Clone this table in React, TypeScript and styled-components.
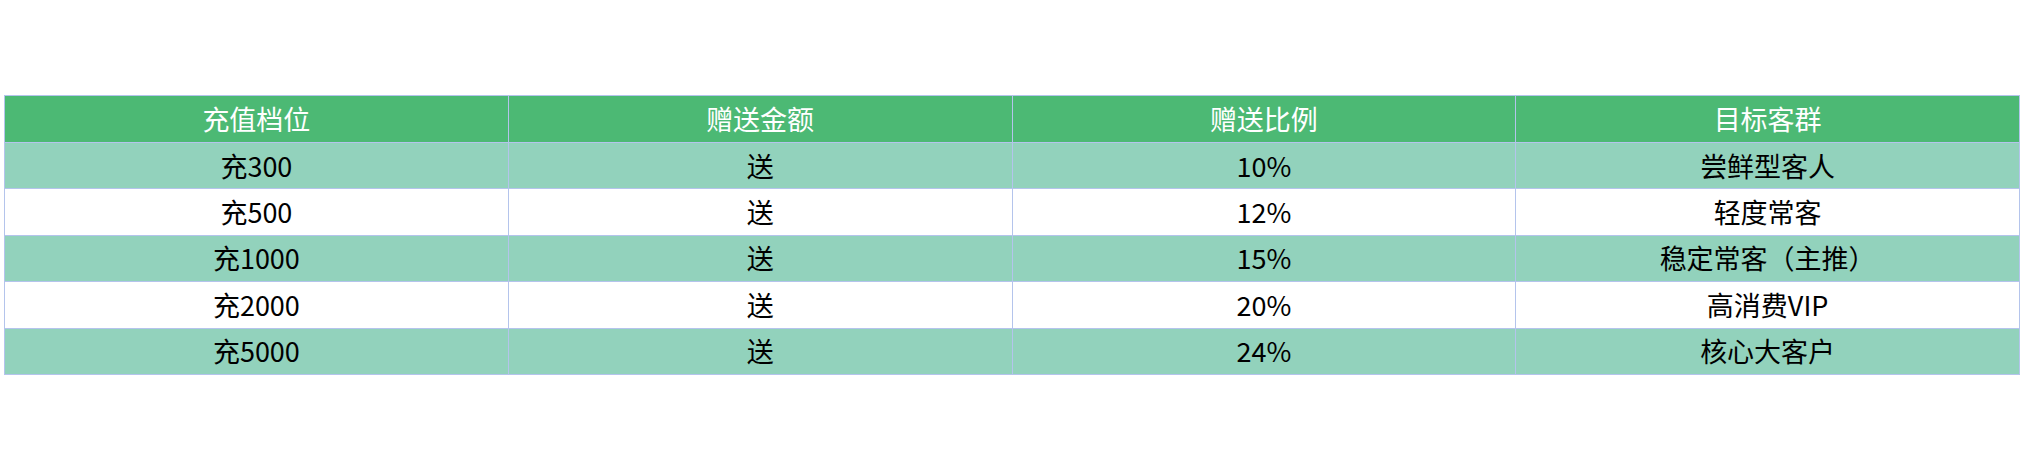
import React from "react";
import styled, { createGlobalStyle } from "styled-components";

const Global = createGlobalStyle`
  html, body { margin: 0; padding: 0; background: #ffffff; }
  body { font-family: "Noto Sans CJK SC", "Noto Sans", sans-serif; }
`;

const Page = styled.div`
  width: 2023px;
  height: 470px;
  box-sizing: border-box;
  padding: 95px 0 0 4px;
`;

const Table = styled.table`
  width: 2016px;
  border-collapse: collapse;
  table-layout: fixed;
  font-family: "Noto Sans CJK SC", "Noto Sans", sans-serif;
  font-size: 27px;
`;

const HeadCell = styled.th`
  height: 46px;
  padding: 0;
  background: #4cb974;
  color: #ffffff;
  font-weight: 400;
  text-align: center;
  vertical-align: middle;
  border: 1px solid #b4c4ec;
  line-height: 1.2;
`;

const Row = styled.tr<{ $shaded: boolean }>`
  background: ${(p) => (p.$shaded ? "#92d2bc" : "#ffffff")};
`;

const Cell = styled.td`
  height: 45.4px;
  padding: 0;
  color: #000000;
  text-align: center;
  vertical-align: middle;
  border: 1px solid #b4c4ec;
  line-height: 1.2;
`;

const headers = ["充值档位", "赠送金额", "赠送比例", "目标客群"];
const rows = [
  ["充300", "送", "10%", "尝鲜型客人"],
  ["充500", "送", "12%", "轻度常客"],
  ["充1000", "送", "15%", "稳定常客（主推）"],
  ["充2000", "送", "20%", "高消费VIP"],
  ["充5000", "送", "24%", "核心大客户"],
];

export default function App() {
  return (
    <>
      <Global />
      <Page>
        <Table>
          <thead>
            <tr>
              {headers.map((h) => (
                <HeadCell key={h}>{h}</HeadCell>
              ))}
            </tr>
          </thead>
          <tbody>
            {rows.map((r, i) => (
              <Row key={i} $shaded={i % 2 === 0}>
                {r.map((c, j) => (
                  <Cell key={j}>{c}</Cell>
                ))}
              </Row>
            ))}
          </tbody>
        </Table>
      </Page>
    </>
  );
}
